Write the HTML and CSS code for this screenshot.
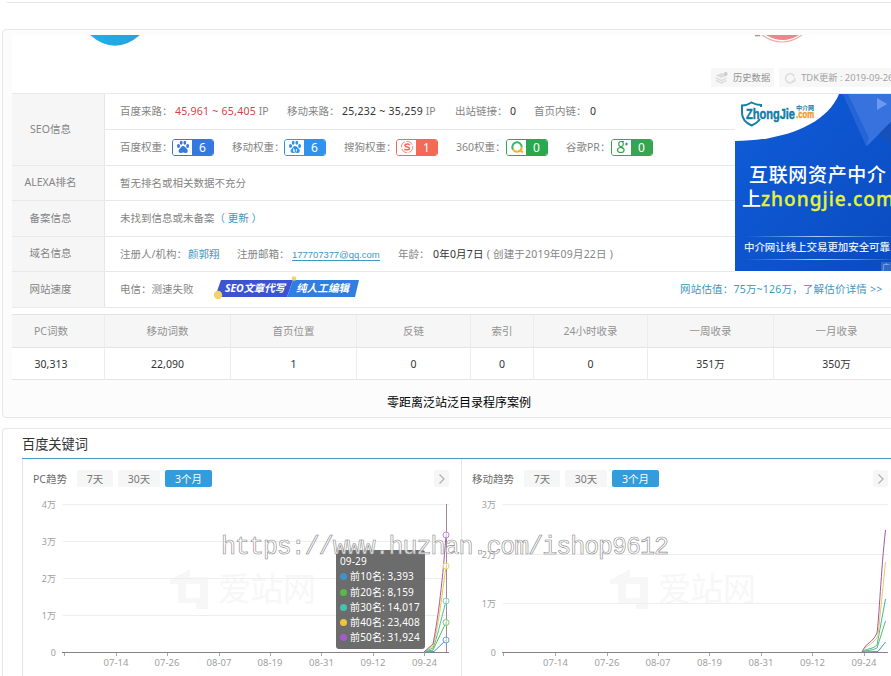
FILE: index.html
```html
<!DOCTYPE html>
<html lang="zh-CN">
<head>
<meta charset="utf-8">
<title>百度关键词</title>
<link rel="stylesheet" href="styles.css">
</head>
<body>
<div class="prev-card"></div>
<section class="card overview">
  <div class="sheet">
    <svg class="logos" width="880" height="20" viewBox="12 35 880 20">
      <defs><linearGradient id="lb"><stop offset="0" stop-color="#1cb0ee"/><stop offset="1" stop-color="#2ba0dc"/></linearGradient></defs>
      <path d="M90 35Q115 56.500 140 35Z" fill="url(#lb)"/>
      <path d="M766 35Q783 45 799 35Z" fill="#ee8588"/>
      <path d="M762 35Q782 49 802 35" fill="none" stroke="#f5a9a9" stroke-width="1.200"/>
      <path d="M755 35.500h5" stroke="#e77378" stroke-width="1.500"/>
    </svg>
    <div class="tools">
      <span class="tool history"><svg width="14" height="16" viewBox="0 0 17 16"><path d="M1 5l7-3 6 3-6 3zM1 7l7 3 6-3v2l-6 3-7-3zM1 10l7 3 6-3v2l-6 3-7-3z" fill="#dcdcdc"/><circle cx="13" cy="3" r="2.300" fill="#ccc"/></svg>历史数据</span>
      <span class="tool tdk"><svg width="14" height="16" viewBox="0 0 16 16"><path d="M12.500 11A5.200 5.200 0 1 1 13 6.500M13.500 8v3.500h-3.500" fill="none" stroke="#dadada" stroke-width="1.500"/></svg>TDK更新 : 2019-09-26</span>
    </div>
    <div class="info">
      <div class="label seo">SEO信息</div>
      <div class="row traffic"><span>百度来路：</span><span><b class="red">45,961 ~ 65,405</b> IP</span><span>移动来路：</span><span><b>25,232 ~ 35,259</b> IP</span><span>出站链接：</span><b>0</b><span>首页内链：</span><b>0</b></div>
      <div class="row weights">
        <span>百度权重：</span><span class="badge baidu"><i><svg width="14" height="14" viewBox="0 0 14 14"><g fill="currentColor"><ellipse cx="2.500" cy="6" rx="1.500" ry="2"/><ellipse cx="5.200" cy="2.800" rx="1.400" ry="2"/><ellipse cx="8.800" cy="2.800" rx="1.400" ry="2"/><ellipse cx="11.600" cy="6" rx="1.500" ry="2"/><path d="M7 6C5.200 6 5 8 3.500 9S2.500 13 4.500 13 6 12.500 7 12.500s1.500.5 3 .5 2.500-2.500 1-4S8.800 6 7 6z"/></g></svg></i><em>6</em></span>
        <span>移动权重：</span><span class="badge mobile"><i><svg width="14" height="14" viewBox="0 0 14 14"><g fill="currentColor"><ellipse cx="2.500" cy="6" rx="1.500" ry="2"/><ellipse cx="5.200" cy="2.800" rx="1.400" ry="2"/><ellipse cx="8.800" cy="2.800" rx="1.400" ry="2"/><ellipse cx="11.600" cy="6" rx="1.500" ry="2"/><path d="M7 6C5.200 6 5 8 3.500 9S2.500 13 4.500 13 6 12.500 7 12.500s1.500.5 3 .5 2.500-2.500 1-4S8.800 6 7 6z"/></g><path d="M5.500 8.500v3h1.200v-2M8.500 9v2.500" stroke="#fff" fill="none" stroke-width=".8"/></svg></i><em>6</em></span>
        <span>搜狗权重：</span><span class="badge sogou"><i><svg width="14" height="14" viewBox="0 0 14 14"><circle cx="7" cy="7" r="5.700" fill="none" stroke="currentColor" stroke-width=".8" stroke-dasharray="7 1.500"/><path d="M9.800 4.700C7 3.500 4.500 4.200 5 5.800s4.500.8 4.500 2.700-3 1.500-5.200.7" fill="none" stroke="currentColor" stroke-width="1.500"/></svg></i><em>1</em></span>
        <span>360权重：</span><span class="badge so"><i><svg width="14" height="14" viewBox="0 0 14 14"><path d="M3 9.500A4.700 4.700 0 1 1 11.700 7" fill="none" stroke="#38b765" stroke-width="2"/><path d="M11.700 7A4.700 4.700 0 0 1 3 9.500M10 10l3 2.500" fill="none" stroke="#f3b32c" stroke-width="2"/></svg></i><em>0</em></span>
        <span>谷歌PR：</span><span class="badge google"><i><svg width="14" height="14" viewBox="0 0 14 14"><g fill="none" stroke="currentColor" stroke-width="1.200"><ellipse cx="6" cy="4" rx="2.300" ry="2.500"/><ellipse cx="5.800" cy="10" rx="3.300" ry="2.500"/><path d="M6 1.500h3M5 6.500l3 2M10 4h3M11.500 2.500v3"/></g></svg></i><em>0</em></span>
      </div>
      <div class="label">ALEXA排名</div>
      <div class="row">暂无排名或相关数据不充分</div>
      <div class="label">备案信息</div>
      <div class="row record"><span>未找到信息或未备案</span><a>（ 更新 ）</a></div>
      <div class="label">域名信息</div>
      <div class="row domain"><span>注册人/机构：</span><a>颜郭翔</a><span>注册邮箱：</span><a class="mail">177707377@qq.com</a><span>年龄：</span><span class="age"><b>0年0月7日</b> ( 创建于2019年09月22日 )</span></div>
      <div class="label">网站速度</div>
      <div class="row speed"><span>电信：测速失败</span>
        <svg class="promo" width="150" height="26" viewBox="0 0 150 26"><path d="M8 4H80L74 21H2Z" fill="#3c54d2"/><path d="M80 4H146L142 21H74Z" fill="#327de0"/><circle cx="5" cy="19" r="4.200" fill="#f2d366"/><circle cx="81" cy="2.500" r="2.300" fill="#f2d366"/><text x="12" y="16" textLength="60">SEO文章代写</text><text x="83" y="16" textLength="53">纯人工编辑</text></svg>
        <a>网站估值：75万~126万，了解估价详情 &gt;&gt;</a></div>
      <svg class="banner" width="156" height="177" viewBox="0 0 156 177">
        <defs><linearGradient id="bg" x2="1" y2="1"><stop offset="0" stop-color="#105cda"/><stop offset="1" stop-color="#0a4cc0"/></linearGradient><linearGradient id="rule"><stop offset="0" stop-color="#8fc5ff" stop-opacity="0"/><stop offset=".5" stop-color="#a9d2ff"/><stop offset="1" stop-color="#8fc5ff" stop-opacity=".1"/></linearGradient></defs>
        <path d="M0 0H156V177H0Z" fill="url(#bg)"/>
        <path d="M108 0H156V28L132 52Z" fill="#3772df"/><path d="M108 0h5l21 44-3 8z" fill="#2464d6"/><path d="M142 4l10 6-10 6z" fill="#6b9bf0"/><path d="M156 28v24l-12-12z" fill="#1650b8"/>
        <path d="M0 0H104C91 32 45 47 0 47Z" fill="#fff"/>
        <path d="M26 13V11Q21 11 16.500 8.500 12 11.500 7 11.500V19Q7 27 16.500 31.500 23 28.500 25 25" fill="none" stroke="#1680a9" stroke-width="2"/>
        <text class="brand" x="11" y="25" textLength="49" lengthAdjust="spacingAndGlyphs">ZhongJie</text><text class="dotcom" x="61" y="24" textLength="18" lengthAdjust="spacingAndGlyphs">.com</text><text class="tiny" x="61" y="16" textLength="18">中介网</text>
        <text class="headline" x="14" y="88" textLength="137">互联网资产中介</text>
        <text class="headline" x="7" y="112">上</text><text class="headline yellow" x="26" y="112" textLength="133">zhongjie.com</text>
        <path d="M10 142h146v1H10zM10 165h146v1H10z" fill="url(#rule)"/>
        <text class="slogan" x="9" y="157" textLength="146">中介网让线上交易更加安全可靠</text>
        <path d="M146 168h10v9h-10z" fill="#2f68c8"/><text class="ad" x="147" y="176">广</text>
      </svg>
    </div>
    <div class="counts">
      <div class="th">PC词数</div><div class="th">移动词数</div><div class="th">首页位置</div><div class="th">反链</div><div class="th">索引</div><div class="th">24小时收录</div><div class="th">一周收录</div><div class="th">一月收录</div>
      <div>30,313</div><div>22,090</div><div>1</div><div>0</div><div>0</div><div>0</div><div>351万</div><div>350万</div>
    </div>
  </div>
  <p class="caption">零距离泛站泛目录程序案例</p>
</section>
<section class="card keywords">
  <h2>百度关键词</h2>
  <div class="panels">
    <div class="panel">
      <div class="tabs"><span>PC趋势</span><button>7天</button><button class="mid">30天</button><button class="on">3个月</button><button class="next"><svg width="8" height="12" viewBox="0 0 8 12"><path d="M1.500 1.500L6 6l-4.500 4.500" fill="none" stroke="#b0b0b0" stroke-width="1.200"/></svg></button></div>
      <svg class="chart" width="438" height="186" viewBox="23 490 438 186">
        <g class="mark"><path d="M178 575V603H196V609H208V577H190V569L170 580V584H178ZM186 584H200V598H186Z" fill-rule="evenodd"/><text x="218" y="601" textLength="98">爱站网</text></g>
        <path class="grid" d="M63 504.500H449M63 541.500H449M63 578.500H449M63 615.500H449"/>
        <g class="ylab"><text x="56" y="508">4万</text><text x="56" y="545">3万</text><text x="56" y="582">2万</text><text x="56" y="619">1万</text><text x="56" y="656">0</text></g>
        <g class="xlab"><text x="116" y="666">07-14</text><text x="167" y="666">07-26</text><text x="219" y="666">08-07</text><text x="270" y="666">08-19</text><text x="321.500" y="666">08-31</text><text x="373" y="666">09-12</text><text x="424.500" y="666">09-24</text></g>
        <path class="tick" d="M64.500 653v3M116.500 653v3M167.500 653v3M219.500 653v3M270.500 653v3M321.500 653v3M373.500 653v3M424.500 653v3"/>
        <path class="axis" d="M62 652.500H449"/><path d="M446.500 504V652" stroke="#9a8a96" fill="none"/>
        <g class="lines"><path stroke="#3f92cc" d="M424 652L434 651.500 446 640"/><path stroke="#58b947" d="M424 652L433 650 446 622.500"/><path stroke="#46c3a9" d="M424 652L433 648C437 638 440 624 446 601"/><path stroke="#ecc63e" d="M424 652L433 646C437 632 440 612 446 566"/><path stroke="#aa5b98" d="M424 652L433 644C437 624 442 590 446 535"/></g>
        <g class="dots"><circle cx="446" cy="640" r="3" stroke="#65a7d8"/><circle cx="446" cy="622.500" r="3" stroke="#78cc6c"/><circle cx="446" cy="601" r="3" stroke="#74d3c5"/><circle cx="446" cy="566" r="3" stroke="#f3d365"/><circle cx="446" cy="535" r="3" stroke="#b68ad8"/></g>
      </svg>
      <div class="tip"><div>09-29</div><div><i class="c1"></i>前10名: 3,393</div><div><i class="c2"></i>前20名: 8,159</div><div><i class="c3"></i>前30名: 14,017</div><div><i class="c4"></i>前40名: 23,408</div><div><i class="c5"></i>前50名: 31,924</div></div>
    </div>
    <div class="panel second">
      <div class="tabs"><span>移动趋势</span><button>7天</button><button class="mid">30天</button><button class="on">3个月</button><button class="next"><svg width="8" height="12" viewBox="0 0 8 12"><path d="M1.500 1.500L6 6l-4.500 4.500" fill="none" stroke="#b0b0b0" stroke-width="1.200"/></svg></button></div>
      <svg class="chart" width="438" height="186" viewBox="462 490 438 186">
        <g class="mark"><path d="M618 575V603H636V609H648V577H630V569L610 580V584H618ZM626 584H640V598H626Z" fill-rule="evenodd"/><text x="658" y="601" textLength="98">爱站网</text></g>
        <path class="grid" d="M503 504.500H888M503 554.500H888M503 603.500H888"/>
        <g class="ylab"><text x="496" y="508">3万</text><text x="496" y="558">2万</text><text x="496" y="607">1万</text><text x="496" y="656">0</text></g>
        <g class="xlab"><text x="555.500" y="666">07-14</text><text x="607" y="666">07-26</text><text x="658" y="666">08-07</text><text x="709.500" y="666">08-19</text><text x="761" y="666">08-31</text><text x="812.500" y="666">09-12</text><text x="864" y="666">09-24</text></g>
        <path class="tick" d="M503.500 653v3M555.500 653v3M607.500 653v3M658.500 653v3M709.500 653v3M761.500 653v3M812.500 653v3M864.500 653v3"/>
        <path class="axis" d="M502 652.500H888"/>
        <g class="lines"><path stroke="#3f9ba0" d="M862 652L878 651.500 885.500 642"/><path stroke="#58b973" d="M862 652C866 650 872 651 877 648L885.500 621"/><path stroke="#46b990" d="M862 652C866 648 872 650 877 645L885.500 599"/><path stroke="#ecc66e" d="M862 652C867 644 873 645 878 636L885.500 562"/><path stroke="#a05a98" d="M862 652C867 641 872 644 877 633C879 620 881 570 885.500 530"/></g>
      </svg>
    </div>
  </div>
</section>
<svg class="stamp" width="460" height="40" viewBox="0 0 460 40"><text x="4" y="24" textLength="448">https://www.huzhan.com/ishop9612</text></svg>
</body>
</html>
```
FILE: styles.css
```css
* { box-sizing: border-box; }
body { margin: 0; width: 891px; height: 676px; overflow: hidden; background: #fff; color: #858585; font: 400 10.5px/16px "Noto Sans", "Noto Sans CJK SC", sans-serif; position: relative; }
b { font-weight: 400; color: #333; }
a { color: #3f97c4; }
svg { display: block; flex: none; }
.prev-card { height: 3px; margin-left: 6px; border-bottom: 1px solid #e6e6e6; border-radius: 0 0 0 3px; }
.card { width: 900px; margin-left: 2px; border: 1px solid #e7e7e7; border-radius: 4px; background: #fcfcfc; }
.overview { height: 389px; margin-top: 26px; padding: 5px 0 0 9px; }
.sheet { width: 888px; height: 345px; background: #fff; }
.logos { height: 20px; }
.tools { display: flex; gap: 5px; padding: 13px 0 0 699px; height: 38px; }
.tool { display: flex; align-items: center; gap: 4px; height: 19px; padding: 0 4px; background: #f7f7f7; color: #929292; font-size: 9.300px; white-space: nowrap; }
.history { width: 64px; }
.tdk { width: 130px; color: #a2a2a2; }
.info { display: grid; grid-template-columns: 93px 630px 165px; grid-template-rows: 36px 36px 35px 36px 35px 36px; border-top: 1px solid #e9e9e9; height: 214px; }
.label { grid-column: 1; display: flex; align-items: center; justify-content: center; padding: 0 15px 2px 0; background: #f6f6f6; border-right: 1px solid #e7e7e7; border-bottom: 1px solid #eaeaea; }
.seo { grid-row: 1 / 3; }
.row { grid-column: 2; display: flex; align-items: center; padding: 0 0 1px 15px; border-bottom: 1px solid #e8e8e8; white-space: nowrap; }
.traffic { display: grid; grid-template-columns: 55px 112px 55px 113px 55px 24px 56px 20px; }
.traffic b { letter-spacing: .25px; }
b.red { color: #cd4545; }
.weights { display: grid; grid-template-columns: 52px 60px 52px 60px 52px 60px 50px 60px 45px 42px; }
.badge { display: flex; width: 42px; height: 17px; border: 1px solid currentColor; border-radius: 3px; overflow: hidden; }
.badge i { flex: 1; display: grid; place-items: center; background: #fff; }
.badge em { width: 21px; background: currentColor; text-align: center; font: 400 12px/15px "Noto Sans", sans-serif; }
.badge em::first-line { color: #fff; }
.baidu { color: #3579df; }
.mobile { color: #3092ec; }
.sogou { color: #f26956; }
.so { color: #2aa84f; }
.google { color: #36a450; }
.domain { display: grid; grid-template-columns: 68px 49px 55px 106px 35px 200px; }
.age { letter-spacing: .2px; }
.mail { justify-self: start; padding-top: 4px; font: 9.500px/10px "Liberation Sans", sans-serif; letter-spacing: -.05px; border-bottom: 1px solid #3f97c4; }
.speed { grid-column: 2 / 4; padding-right: 12px; }
.promo { margin-left: 19px; }
.promo text { fill: #fff; font: italic 700 10.500px "Noto Sans", "Noto Sans CJK SC", sans-serif; }
.speed a { margin-left: auto; width: 208px; letter-spacing: .2px; }
.banner { grid-column: 3; grid-row: 1 / 6; }
.brand { fill: #147ba7; font: 700 15px "Liberation Sans", sans-serif; stroke: #147ba7; stroke-width: .5px; }
.dotcom { fill: #ee9d26; font: 700 10px "Liberation Sans", sans-serif; stroke: #ee9d26; stroke-width: .4px; }
.tiny { fill: #147ba7; font: 700 6px "Noto Sans CJK SC", sans-serif; }
.headline { fill: #fff; font: 500 19px "Noto Sans", "Noto Sans CJK SC", sans-serif; }
.yellow { fill: #e5f33c; stroke: #e5f33c; stroke-width: .3px; }
.slogan { fill: #e4f0ff; font: 500 10.500px "Noto Sans CJK SC", sans-serif; }
.ad { fill: #9dbcf0; font: 8px "Noto Sans CJK SC", sans-serif; }
.counts { display: grid; grid-template-columns: 93px 126px 126px 114px 63px 114px 126px 126px; grid-template-rows: 33px 32px; margin-top: 7px; border-top: 1px solid #e4e4e4; }
.counts div { display: grid; place-items: center; padding-right: 14px; border-right: 1px solid #ececec; border-bottom: 1px solid #e4e4e4; color: #333; }
.counts div:not(:nth-child(8n+1)) { padding-right: 0; }
.counts .th { background: #f6f6f6; color: #929292; }
.caption { margin: 13px 0 0; width: 894px; text-align: center; color: #000; font: 400 12px/18px "Noto Sans CJK SC", sans-serif; }
.keywords { height: 248px; margin-top: 10px; padding: 4px 0 0 19px; background: #fff; border-bottom: 0; border-radius: 4px 4px 0 0; }
h2 { margin: 0; height: 26px; color: #333; font: 400 13.200px/22px "Noto Sans CJK SC", sans-serif; border-bottom: 1px solid #4798bf; }
.panels { display: flex; }
.panel { position: relative; width: 439px; height: 217px; border-left: 1px solid #e5e5e5; }
.tabs { display: flex; align-items: center; height: 17px; margin: 11px 0 3px; padding-left: 10px; color: #6b6b6b; }
.tabs span { width: 44px; }
.tabs button { width: 36px; height: 17px; margin: 0 5px 0 0; padding: 0; border: 0; border-radius: 2px; background: #f6f6f6; color: #777; font: inherit; line-height: 16px; }
.tabs .mid { width: 42px; }
.tabs .on { width: 47px; background: #329cdd; color: #fff; }
.tabs .next { display: grid; place-items: center; width: 15px; margin-left: 217px; margin-right: 0; }
.second .tabs span { width: 52px; }
.second .tabs .next { margin-left: 209px; }
.chart { height: 186px; }
.mark { fill: #f7f7f7; font: 400 33px "Noto Sans CJK SC", sans-serif; }
.grid { stroke: #eee; }
.ylab { text-anchor: end; fill: #a0a0a0; font-size: 9px; }
.xlab { text-anchor: middle; fill: #a0a0a0; font-size: 9.500px; }
.tick { stroke: #aaa; }
.axis { stroke: #8f7d8c; }
.lines { fill: none; stroke-width: 1; }
.dots { fill: rgba(255, 255, 255, .6); stroke-width: 1; }
.tip { position: absolute; left: 313px; top: 91px; width: 89px; height: 99px; padding: 4px 4px 0; border-radius: 3px; background: rgba(80, 80, 80, .84); color: #fff; font: 400 10px/15.300px "Noto Sans", "Noto Sans CJK SC", sans-serif; letter-spacing: .15px; white-space: nowrap; }
.tip i { display: inline-block; width: 7px; height: 7px; margin-right: 3px; border-radius: 50%; }
.c1 { background: #3f92cc; }
.c2 { background: #58b947; }
.c3 { background: #46c3b0; }
.c4 { background: #ecc63e; }
.c5 { background: #a55bce; }
.stamp { position: absolute; left: 217px; top: 530px; }
.stamp text { fill: rgba(255, 255, 255, .8); stroke: #8a8a8a; stroke-width: .6px; font: 25px "Liberation Mono", monospace; }
```
